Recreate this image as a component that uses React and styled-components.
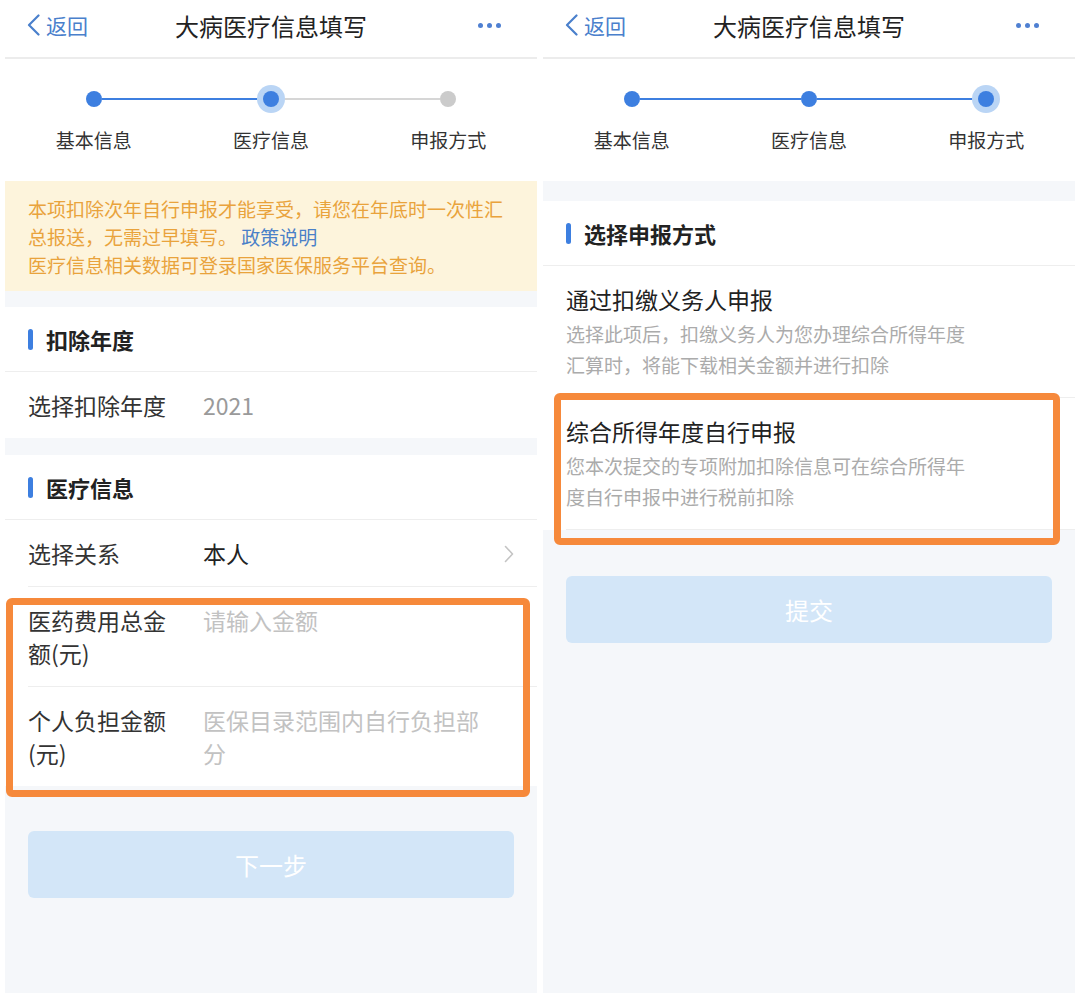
import React from 'react'
import styled, { createGlobalStyle } from 'styled-components'

const GlobalStyle = createGlobalStyle`
  html, body {
    margin: 0;
    padding: 0;
    background: #fff;
  }
  body {
    font-family: "Noto Sans CJK SC", "Noto Sans", sans-serif;
  }
  * { box-sizing: border-box; }
`

const Screens = styled.div`
  display: flex;
  gap: 6px;
  padding: 0 5px;
  height: 993px;
  overflow: hidden;
`

const Phone = styled.div`
  width: 532px;
  flex-shrink: 0;
  display: flex;
  flex-direction: column;
  background: #f5f7fa;
`

const NavBar = styled.header`
  height: 59px;
  display: grid;
  grid-template-columns: 1fr auto 1fr;
  align-items: center;
  padding: 0 22px 7px;
  background: #fff;
  border-bottom: 2px solid #ececec;
`

const Back = styled.div`
  display: flex;
  align-items: center;
  gap: 6px;
  color: #4a80cc;
  font-size: 21px;
  justify-self: start;
`

const Title = styled.h1`
  margin: 0;
  font-size: 24px;
  font-weight: 400;
  color: #222;
`

const More = styled.div`
  justify-self: end;
  display: flex;
  gap: 4px;
  margin-right: 14px;
  span {
    width: 5px;
    height: 5px;
    border-radius: 50%;
    background: #4f80d2;
  }
`

const Steps = styled.div`
  display: grid;
  grid-template-columns: repeat(3, 1fr);
  padding: 32px 0 28px;
  background: #fff;
`

const Step = styled.div`
  display: flex;
  flex-direction: column;
  align-items: center;
`

const Track = styled.div`
  display: flex;
  align-items: center;
  width: 100%;
  height: 16px;
`

const Line = styled.span`
  flex: 1;
  height: 2px;
  background: ${p => (p.$hidden ? 'transparent' : p.$done ? '#3d7fe0' : '#d6d6d6')};
`

const Dot = styled.span`
  position: relative;
  z-index: 1;
  width: 16px;
  height: 16px;
  border-radius: 50%;
  background: ${p => (p.$state === 'todo' ? '#cbcbcb' : '#3d7fe0')};
  box-shadow: ${p => (p.$state === 'active' ? '0 0 0 6px #bad5f5' : 'none')};
`

const StepLabel = styled.span`
  margin-top: 20px;
  font-size: 19px;
  line-height: 26px;
  color: #333;
`

const Notice = styled.div`
  padding: 14px 20px 12px 23px;
  background: #fdf4dc;
  color: #e9a33c;
  font-size: 19px;
  line-height: 28px;
`

const PolicyLink = styled.span`
  color: #4a80c8;
`

const Card = styled.section`
  margin-top: ${p => p.$gap}px;
  background: #fff;
`

const CardTitle = styled.h2`
  margin: 0;
  height: 65px;
  display: flex;
  align-items: center;
  gap: 13px;
  padding: 0 23px;
  font-size: 22px;
  font-weight: 700;
  color: #222;
  border-bottom: 1px solid #eeeeee;
  &::before {
    content: '';
    width: 5px;
    height: 21px;
    border-radius: 3px;
    background: #3d7fe0;
  }
`

const Field = styled.div`
  display: flex;
  align-items: flex-start;
  margin-left: 23px;
  padding: 17px 23px 16px 0;
  border-top: ${p => (p.$divider ? '1px solid #eeeeee' : 'none')};
  font-size: 23px;
  line-height: 33px;
`

const Label = styled.span`
  flex-shrink: 0;
  width: 150px;
  margin-right: 25px;
  color: #333;
`

const Value = styled.span`
  flex: 1;
  color: ${p => (p.$tone === 'placeholder' ? '#c2c2c2' : p.$tone === 'muted' ? '#9a9a9a' : '#222')};
`

const Trail = styled.span`
  flex-shrink: 0;
  width: 20px;
  align-self: center;
  display: flex;
  justify-content: flex-end;
`

const Highlight = styled.div`
  position: relative;
  &::after {
    content: '';
    position: absolute;
    top: ${p => p.$top}px;
    right: ${p => p.$right}px;
    bottom: ${p => p.$bottom}px;
    left: ${p => p.$left}px;
    border: 7px solid #f6893b;
    border-radius: 6px;
    pointer-events: none;
  }
`

const Option = styled.div`
  margin-left: 23px;
  padding: 17px 100px 17px 0;
  border-top: ${p => (p.$divider ? '1px solid #eeeeee' : 'none')};
  border-bottom: ${p => (p.$last ? '1px solid #eeeeee' : 'none')};
`

const OptionTitle = styled.div`
  font-size: 23px;
  line-height: 32px;
  color: #222;
`

const OptionDesc = styled.div`
  margin-top: 3px;
  font-size: 19px;
  line-height: 31px;
  color: #ababab;
`

const SubmitButton = styled.button`
  margin: ${p => p.$top}px 23px 0;
  height: 67px;
  border: none;
  border-radius: 6px;
  background: #d3e6f8;
  color: #fff;
  font-family: inherit;
  font-size: 24px;
`

const stepNames = ['基本信息', '医疗信息', '申报方式']

function Header() {
  return (
    <NavBar>
      <Back>
        <svg width="13" height="22" viewBox="0 0 13 22">
          <path d="M11.5 1.5 L2 11 L11.5 20.5" fill="none" stroke="#4a80cc" strokeWidth="2.2" strokeLinecap="round" strokeLinejoin="round" />
        </svg>
        返回
      </Back>
      <Title>大病医疗信息填写</Title>
      <More>
        <span />
        <span />
        <span />
      </More>
    </NavBar>
  )
}

function Progress({ current }) {
  return (
    <Steps>
      {stepNames.map((name, i) => (
        <Step key={name}>
          <Track>
            <Line $hidden={i === 0} $done={i <= current} />
            <Dot $state={i < current ? 'done' : i === current ? 'active' : 'todo'} />
            <Line $hidden={i === stepNames.length - 1} $done={i + 1 <= current} />
          </Track>
          <StepLabel>{name}</StepLabel>
        </Step>
      ))}
    </Steps>
  )
}

function Chevron() {
  return (
    <svg width="10" height="18" viewBox="0 0 10 18">
      <path d="M1.5 1.5 L8.5 9 L1.5 16.5" fill="none" stroke="#c4c4c4" strokeWidth="1.6" strokeLinecap="round" strokeLinejoin="round" />
    </svg>
  )
}

function MedicalScreen() {
  return (
    <Phone>
      <Header />
      <Progress current={1} />
      <Notice>
        本项扣除次年自行申报才能享受，请您在年底时一次性汇总报送，无需过早填写。 <PolicyLink>政策说明</PolicyLink>
        <br />
        医疗信息相关数据可登录国家医保服务平台查询。
      </Notice>
      <Card $gap={16}>
        <CardTitle>扣除年度</CardTitle>
        <Field>
          <Label>选择扣除年度</Label>
          <Value $tone="muted">2021</Value>
          <Trail />
        </Field>
      </Card>
      <Card $gap={17}>
        <CardTitle>医疗信息</CardTitle>
        <Field>
          <Label>选择关系</Label>
          <Value>本人</Value>
          <Trail>
            <Chevron />
          </Trail>
        </Field>
        <Highlight $top={12} $right={7} $bottom={-11} $left={1}>
          <Field $divider>
            <Label>医药费用总金额(元)</Label>
            <Value $tone="placeholder">请输入金额</Value>
            <Trail />
          </Field>
          <Field $divider>
            <Label>个人负担金额(元)</Label>
            <Value $tone="placeholder">医保目录范围内自行负担部分</Value>
            <Trail />
          </Field>
        </Highlight>
      </Card>
      <SubmitButton $top={45}>下一步</SubmitButton>
    </Phone>
  )
}

function ReportScreen() {
  return (
    <Phone>
      <Header />
      <Progress current={2} />
      <Card $gap={20}>
        <CardTitle>选择申报方式</CardTitle>
        <Option>
          <OptionTitle>通过扣缴义务人申报</OptionTitle>
          <OptionDesc>选择此项后，扣缴义务人为您办理综合所得年度汇算时，将能下载相关金额并进行扣除</OptionDesc>
        </Option>
        <Highlight $top={-4} $right={15} $bottom={-15} $left={11}>
          <Option $divider $last>
            <OptionTitle>综合所得年度自行申报</OptionTitle>
            <OptionDesc>您本次提交的专项附加扣除信息可在综合所得年度自行申报中进行税前扣除</OptionDesc>
          </Option>
        </Highlight>
      </Card>
      <SubmitButton $top={46}>提交</SubmitButton>
    </Phone>
  )
}

export default function App() {
  return (
    <>
      <GlobalStyle />
      <Screens>
        <MedicalScreen />
        <ReportScreen />
      </Screens>
    </>
  )
}
